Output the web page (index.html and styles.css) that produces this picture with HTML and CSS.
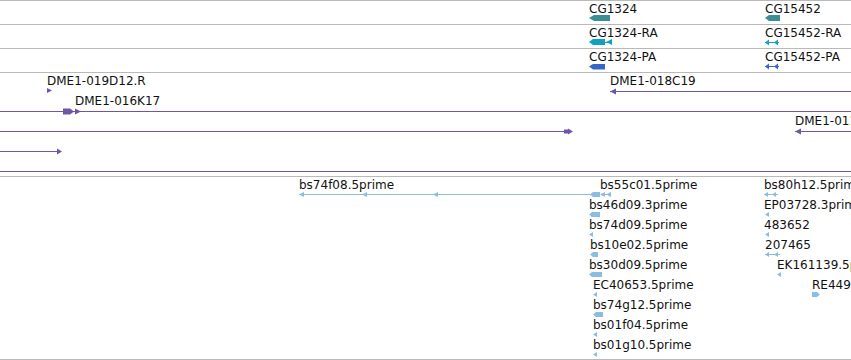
FILE: index.html
```html
<!DOCTYPE html>
<html>
<head>
<meta charset="utf-8">
<title>Genome browser tracks</title>
<link rel="stylesheet" href="styles.css">
</head>
<body>
<div class="browser">
  <section class="track genes">
    <div class="row">
      <svg class="canvas" width="851" height="23" viewBox="0 1 851 23">
        <text class="lbl" x="589" y="13">CG1324</text>
        <polygon class="gene" points="589,18 594,15 610,15 610,21 594,21"/>
        <text class="lbl" x="765" y="13">CG15452</text>
        <polygon class="gene" points="765,18 769,15 780,15 780,21 769,21"/>
      </svg>
    </div>
    <div class="row">
      <svg class="canvas" width="851" height="23" viewBox="0 25 851 23">
        <text class="lbl" x="589" y="37">CG1324-RA</text>
        <polygon class="mrna" points="589,42 593,39 605,39 605,45 593,45"/>
        <line class="mrna-line" x1="604" y1="42.5" x2="608" y2="42.5"/>
        <polygon class="mrna" points="606,42 612,39 612,45"/>
        <text class="lbl" x="765" y="37">CG15452-RA</text>
        <line class="mrna-line" x1="765" y1="42.5" x2="779" y2="42.5"/>
        <polygon class="mrna" points="765,42.5 769,39.5 769,45.5"/>
        <polygon class="mrna" points="774,42.5 778,39.5 778,45.5"/>
      </svg>
    </div>
    <div class="row">
      <svg class="canvas" width="851" height="23" viewBox="0 49 851 23">
        <text class="lbl" x="589" y="61">CG1324-PA</text>
        <polygon class="cds" points="589,66.5 593,64 605,64 605,69.5 593,69.5"/>
        <text class="lbl" x="765" y="61">CG15452-PA</text>
        <line class="cds-line" x1="765" y1="66.5" x2="779" y2="66.5"/>
        <polygon class="cds" points="765,66.5 769,63.5 769,69.5"/>
        <polygon class="cds" points="774,66.5 778,63.5 778,69.5"/>
      </svg>
    </div>
  </section>

  <section class="track clones">
    <svg class="canvas" width="851" height="103" viewBox="0 73 851 103">
      <text class="lbl" x="47" y="85">DME1-019D12.R</text>
      <polygon class="clone" points="47,88 52,90.5 47,93"/>

      <text class="lbl" x="610" y="85">DME1-018C19</text>
      <line class="clone-line" x1="610" y1="91.5" x2="851" y2="91.5"/>
      <polygon class="clone" points="610,91.5 616,88.5 616,94.5"/>

      <text class="lbl" x="75" y="105">DME1-016K17</text>
      <line class="clone-line" x1="0" y1="111.5" x2="851" y2="111.5"/>
      <polygon class="clone" points="63,108.5 70,108.5 74,111.5 70,114.5 63,114.5"/>
      <polygon class="clone" points="75,108.5 81,111.5 75,114.5"/>

      <line class="clone-line" x1="0" y1="131.5" x2="566" y2="131.5"/>
      <polygon class="clone" points="564,129.5 568,129.5 568,128.5 573,131.5 568,134.5 568,133.5 564,133.5"/>

      <text class="lbl" x="795" y="125">DME1-011F10</text>
      <line class="clone-line" x1="795" y1="131.5" x2="851" y2="131.5"/>
      <polygon class="clone" points="795,131.5 801,128.5 801,134.5"/>

      <line class="clone-line" x1="0" y1="151.5" x2="58" y2="151.5"/>
      <polygon class="clone" points="57,148.5 62,151.5 57,154.5"/>

      <line class="clone-line" x1="0" y1="171.5" x2="851" y2="171.5"/>
    </svg>
  </section>

  <section class="track ests">
    <svg class="canvas" width="851" height="182" viewBox="0 177 851 182">
      <text class="lbl" x="299" y="189">bs74f08.5prime</text>
      <line class="est-line" x1="299" y1="194.5" x2="592" y2="194.5"/>
      <polygon class="est" points="299,194.5 304,192 304,197"/>
      <polygon class="est" points="362,194.5 367,192 367,197"/>
      <polygon class="est" points="433,194.5 438,192 438,197"/>

      <text class="lbl" x="600" y="189">bs55c01.5prime</text>
      <polygon class="est" points="590,194.5 593,192 600,192 600,197 593,197"/>
      <polygon class="est" points="600,194.5 605,192 605,197"/>
      <line class="est-line" x1="604" y1="194.5" x2="607" y2="194.5"/>
      <polygon class="est" points="606,194.5 611,192 611,197"/>

      <text class="lbl" x="764" y="189">bs80h12.5prime</text>
      <line class="est-line" x1="764" y1="194.5" x2="778" y2="194.5"/>
      <polygon class="est" points="764,194.5 768,192 768,197"/>
      <polygon class="est" points="772,194.5 776,192 776,197"/>

      <text class="lbl" x="589" y="209">bs46d09.3prime</text>
      <polygon class="est" points="589,214.5 592,212 600,212 600,217 592,217"/>
      <text class="lbl" x="764" y="209">EP03728.3prime</text>
      <polygon class="est" points="765,214.5 769,212 769,217"/>

      <text class="lbl" x="589" y="229">bs74d09.5prime</text>
      <polygon class="est" points="589,234.5 593,232 593,237"/>
      <text class="lbl" x="764" y="229">483652</text>
      <polygon class="est" points="765,234.5 769,232 769,237"/>

      <text class="lbl" x="590" y="249">bs10e02.5prime</text>
      <polygon class="est" points="590,254.5 593,252 598,252 598,257 593,257"/>
      <text class="lbl" x="765" y="249">207465</text>
      <line class="est-line" x1="765" y1="254.5" x2="780" y2="254.5"/>
      <polygon class="est" points="765,254.5 769,252 769,257"/>
      <polygon class="est" points="774,254.5 778,252 778,257"/>

      <text class="lbl" x="589" y="269">bs30d09.5prime</text>
      <polygon class="est" points="589,274.5 592,272 602,272 602,277 592,277"/>
      <text class="lbl" x="777" y="269">EK161139.5prime</text>
      <polygon class="est" points="777,274.5 781,272 781,277"/>

      <text class="lbl" x="593" y="289">EC40653.5prime</text>
      <polygon class="est" points="593,294.5 597,292 597,297"/>
      <text class="lbl" x="812" y="289">RE44960.5prime</text>
      <polygon class="est" points="812,292 817,292 820,294.5 817,297 812,297"/>

      <text class="lbl" x="593" y="309">bs74g12.5prime</text>
      <polygon class="est" points="593,314.5 596,312 603,312 603,317 596,317"/>

      <text class="lbl" x="593" y="329">bs01f04.5prime</text>
      <polygon class="est" points="593,334.5 597,332 597,337"/>

      <text class="lbl" x="593" y="349">bs01g10.5prime</text>
      <polygon class="est" points="593,354.5 597,352 597,357"/>
    </svg>
  </section>
</div>
</body>
</html>
```

FILE: styles.css
```css
html, body {
  margin: 0;
  padding: 0;
  background: #ffffff;
  overflow: hidden;
}

.browser {
  width: 851px;
  height: 360px;
  overflow: hidden;
  font-family: "DejaVu Sans", sans-serif;
}

.track {
  display: flex;
  flex-direction: column;
}

.row {
  border-top: 1px solid #b9b9b9;
  height: 23px;
}

.clones {
  border-top: 1px solid #b9b9b9;
  height: 103px;
}

.ests {
  border-top: 1px solid #b9b9b9;
  border-bottom: 1px solid #b9b9b9;
  height: 182px;
}

.canvas {
  display: block;
  overflow: hidden;
}

.lbl {
  font-family: "DejaVu Sans", sans-serif;
  font-size: 12px;
  fill: #111111;
}

.gene { fill: #3b8e96; }
.mrna { fill: #12a0c0; }
.mrna-line { stroke: #12a0c0; stroke-width: 1; shape-rendering: crispEdges; }
.cds { fill: #3567c9; }
.cds-line { stroke: #3567c9; stroke-width: 1; shape-rendering: crispEdges; }
.clone { fill: #6f55a6; }
.clone-line { stroke: #6f55a6; stroke-width: 1; shape-rendering: crispEdges; }
.est { fill: #8abde0; }
.est-line { stroke: #8abde0; stroke-width: 1; shape-rendering: crispEdges; }
```
